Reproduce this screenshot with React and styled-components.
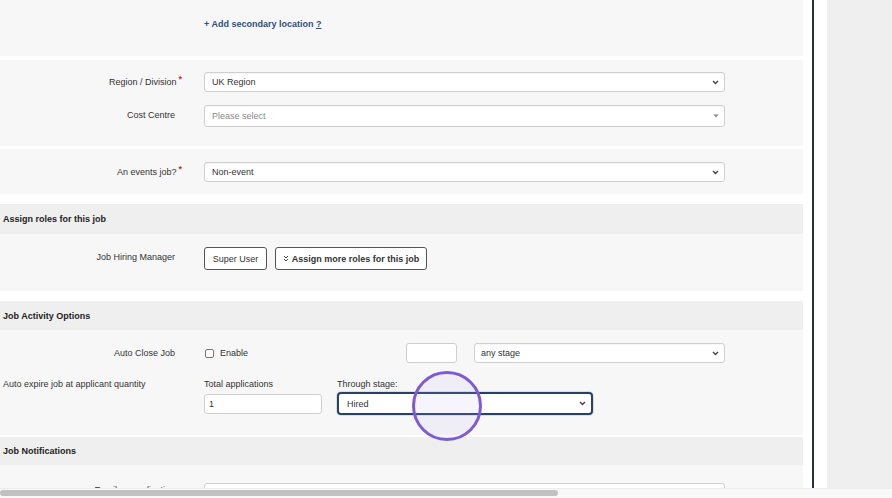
import React from "react";
import styled, { createGlobalStyle } from "styled-components";

const Global = createGlobalStyle`
  html, body { margin: 0; padding: 0; background: #fff; overflow: hidden; }
  * { box-sizing: border-box; }
`;

const Page = styled.div`
  width: 892px;
  height: 498px;
  display: flex;
  flex-direction: column;
  overflow: hidden;
  position: relative;
  font-family: "Liberation Sans", Arial, sans-serif;
  color: #333;
  font-size: 9px;
`;

const Viewport = styled.div`
  flex: 1;
  display: flex;
  overflow: hidden;
  min-height: 0;
`;

const Main = styled.div`
  width: 803px;
  flex-shrink: 0;
  display: flex;
  flex-direction: column;
`;

const Gutter = styled.div`
  width: ${(p) => p.$w}px;
  flex-shrink: 0;
  background: ${(p) => (p.$clear ? "transparent" : "#fff")};
`;

const Rule = styled.div`
  width: 2px;
  flex-shrink: 0;
  background: #26333b;
`;

const Side = styled.div`
  flex: 1;
  background: #efefef;
`;

const Panel = styled.section`
  background: #f7f7f7;
  margin-top: ${(p) => p.$gap || 0}px;
  padding: ${(p) => p.$pad};
  height: ${(p) => (p.$h ? `${p.$h}px` : "auto")};
  flex-shrink: 0;
  display: flex;
  flex-direction: column;
  gap: ${(p) => p.$rowGap || 0}px;
`;

const Header = styled.div`
  background: #efefef;
  margin-top: ${(p) => p.$gap}px;
  height: ${(p) => p.$h}px;
  flex-shrink: 0;
  display: flex;
  align-items: center;
  padding-left: 3px;
  font-weight: bold;
  font-size: 9px;
  color: #222;
`;

const AddLink = styled.a`
  margin-left: 204px;
  font-size: 9px;
  line-height: 12px;
  font-weight: bold;
  color: #2f4f80;
  text-decoration: none;
  span { text-decoration: underline; }
`;

const Row = styled.div`
  display: grid;
  grid-template-columns: 175px 1fr;
  column-gap: 29px;
  align-items: ${(p) => p.$align || "center"};
`;

const Label = styled.div`
  text-align: ${(p) => (p.$left ? "left" : "right")};
  padding-left: ${(p) => (p.$left ? "3px" : "0")};
  padding-top: ${(p) => p.$top || 0}px;
  line-height: 12px;
  font-size: 9px;
  color: #333;
  white-space: nowrap;
  margin-top: ${(p) => p.$shift || 0}px;
`;

const Req = styled.sup`
  color: #c0392b;
  font-size: 9px;
  font-weight: bold;
  margin-left: 2px;
  margin-right: -7px;
  vertical-align: 3px;
  line-height: 0;
`;

const SelectBox = styled.div`
  width: ${(p) => p.$w}px;
  height: ${(p) => p.$h || 20}px;
  background: #fff;
  border: ${(p) => (p.$focus ? "2px solid #2c4061" : "1px solid #cfcfcf")};
  border-radius: ${(p) => (p.$focus ? 4 : 3)}px;
  box-shadow: ${(p) => (p.$focus ? "0 0 0 1px rgba(120,150,200,0.25)" : "inset 0 1px 1px rgba(0,0,0,0.04)")};
  display: flex;
  align-items: center;
  justify-content: space-between;
  padding: 0 5px 0 ${(p) => p.$pl || 7}px;
  font-size: 9px;
  color: ${(p) => (p.$placeholder ? "#8a8a8a" : "#333")};
`;

const TextInput = styled.div`
  width: ${(p) => p.$w}px;
  height: ${(p) => p.$h || 20}px;
  background: #fff;
  border: 1px solid #cfcfcf;
  border-radius: 3px;
  display: flex;
  align-items: center;
  padding-left: 4px;
  font-size: 9px;
  color: #333;
  flex-shrink: 0;
`;

const Buttons = styled.div`
  display: flex;
  gap: 8px;
`;

const Button = styled.button`
  height: 23px;
  width: ${(p) => p.$w}px;
  background: #fff;
  border: 1px solid #555;
  border-radius: 3px;
  font-family: "Liberation Sans", Arial, sans-serif;
  font-size: 9px;
  font-weight: ${(p) => (p.$bold ? "bold" : "normal")};
  color: #333;
  display: flex;
  align-items: center;
  justify-content: center;
  gap: 3px;
  padding: 0;
`;

const FieldLine = styled.div`
  display: flex;
  align-items: center;
`;

const CheckCell = styled.label`
  width: 202px;
  display: flex;
  align-items: center;
  gap: 6px;
  padding-left: 1px;
  font-size: 9px;
  color: #333;
`;

const Box = styled.span`
  width: 9px;
  height: 9px;
  border: 1px solid #777;
  border-radius: 2px;
  background: #fff;
`;

const Stack = styled.div`
  display: flex;
  flex-direction: column;
  margin-left: ${(p) => p.$ml || 0}px;
`;

const Caption = styled.div`
  height: 12px;
  line-height: 12px;
  margin-bottom: 2px;
  font-size: 9px;
  color: #333;
`;

const Controls = styled.div`
  height: 23px;
  display: flex;
  align-items: center;
`;

const Scrollbar = styled.div`
  height: 10px;
  flex-shrink: 0;
  background: #f8f8f8;
  border-top: 1px solid #ececec;
  padding-top: 1px;
`;

const Thumb = styled.div`
  width: 558px;
  height: 6px;
  border-radius: 3px;
  background: #c1c1c1;
`;

const Highlight = styled.div`
  position: absolute;
  left: 412px;
  top: 371px;
  width: 70px;
  height: 70px;
  border-radius: 50%;
  border: 3px solid #7c5bd5;
  background: rgba(180, 165, 235, 0.12);
  pointer-events: none;
`;

const Chevron = () => (
  <svg width="7" height="5" viewBox="0 0 7 5">
    <path d="M1 1 L3.5 3.6 L6 1" fill="none" stroke="#444" strokeWidth="1.4" />
  </svg>
);

const Caret = () => (
  <svg width="6" height="4" viewBox="0 0 6 4">
    <path d="M0.5 0.5 L5.5 0.5 L3 3.5 Z" fill="#888" />
  </svg>
);

const DoubleDown = () => (
  <svg width="6" height="7" viewBox="0 0 6 7">
    <path d="M1 1 L3 3 L5 1 M1 4 L3 6 L5 4" fill="none" stroke="#444" strokeWidth="1" />
  </svg>
);

const Select = ({ value, w, caret, ...rest }) => (
  <SelectBox $w={w} {...rest}>
    <span>{value}</span>
    {caret ? <Caret /> : <Chevron />}
  </SelectBox>
);

export default function App() {
  return (
    <Page>
      <Global />
      <Viewport>
        <Main>
          <Panel $h={56} $pad="18px 0 0 0">
            <AddLink>
              + Add secondary location <span>?</span>
            </AddLink>
          </Panel>

          <Panel $gap={4} $pad="12px 0 19px 0" $rowGap={13}>
            <Row>
              <Label>
                Region / Division<Req>*</Req>
              </Label>
              <Select w={521} value="UK Region" />
            </Row>
            <Row>
              <Label $shift={-3}>Cost Centre</Label>
              <Select w={521} $h={22} caret $placeholder value="Please select" />
            </Row>
          </Panel>

          <Panel $gap={3} $pad="13px 0 12px 0">
            <Row>
              <Label>
                An events job?<Req>*</Req>
              </Label>
              <Select w={521} value="Non-event" />
            </Row>
          </Panel>

          <Header $gap={10} $h={30}>Assign roles for this job</Header>

          <Panel $pad="13px 0 21px 0">
            <Row>
              <Label $shift={-3}>Job Hiring Manager</Label>
              <Buttons>
                <Button $w={63}>Super User</Button>
                <Button $w={152} $bold>
                  <DoubleDown />
                  Assign more roles for this job
                </Button>
              </Buttons>
            </Row>
          </Panel>

          <Header $gap={10} $h={29}>Job Activity Options</Header>

          <Panel $pad="13px 0 20px 0" $rowGap={15}>
            <Row>
              <Label>Auto Close Job</Label>
              <FieldLine>
                <CheckCell>
                  <Box />
                  Enable
                </CheckCell>
                <TextInput $w={51} />
                <Gutter $w={17} $clear />
                <Select w={251} $pl={6} value="any stage" />
              </FieldLine>
            </Row>
            <Row $align="start">
              <Label $left>Auto expire job at applicant quantity</Label>
              <FieldLine>
                <Stack>
                  <Caption>Total applications</Caption>
                  <Controls>
                    <TextInput $w={118} $h={20}>1</TextInput>
                  </Controls>
                </Stack>
                <Stack $ml={15}>
                  <Caption>Through stage:</Caption>
                  <Controls>
                    <Select w={256} $h={23} $focus $pl={8} value="Hired" />
                  </Controls>
                </Stack>
              </FieldLine>
            </Row>
          </Panel>

          <Header $gap={2} $h={28}>Job Notifications</Header>

          <Panel $pad="18px 0 0 0" $h={40}>
            <Row $align="start">
              <Label $top={1}>Email on application</Label>
              <TextInput $w={521} $h={40} />
            </Row>
          </Panel>
        </Main>
        <Gutter $w={9} />
        <Rule />
        <Gutter $w={13} />
        <Side />
      </Viewport>
      <Scrollbar>
        <Thumb />
      </Scrollbar>
      <Highlight />
    </Page>
  );
}
